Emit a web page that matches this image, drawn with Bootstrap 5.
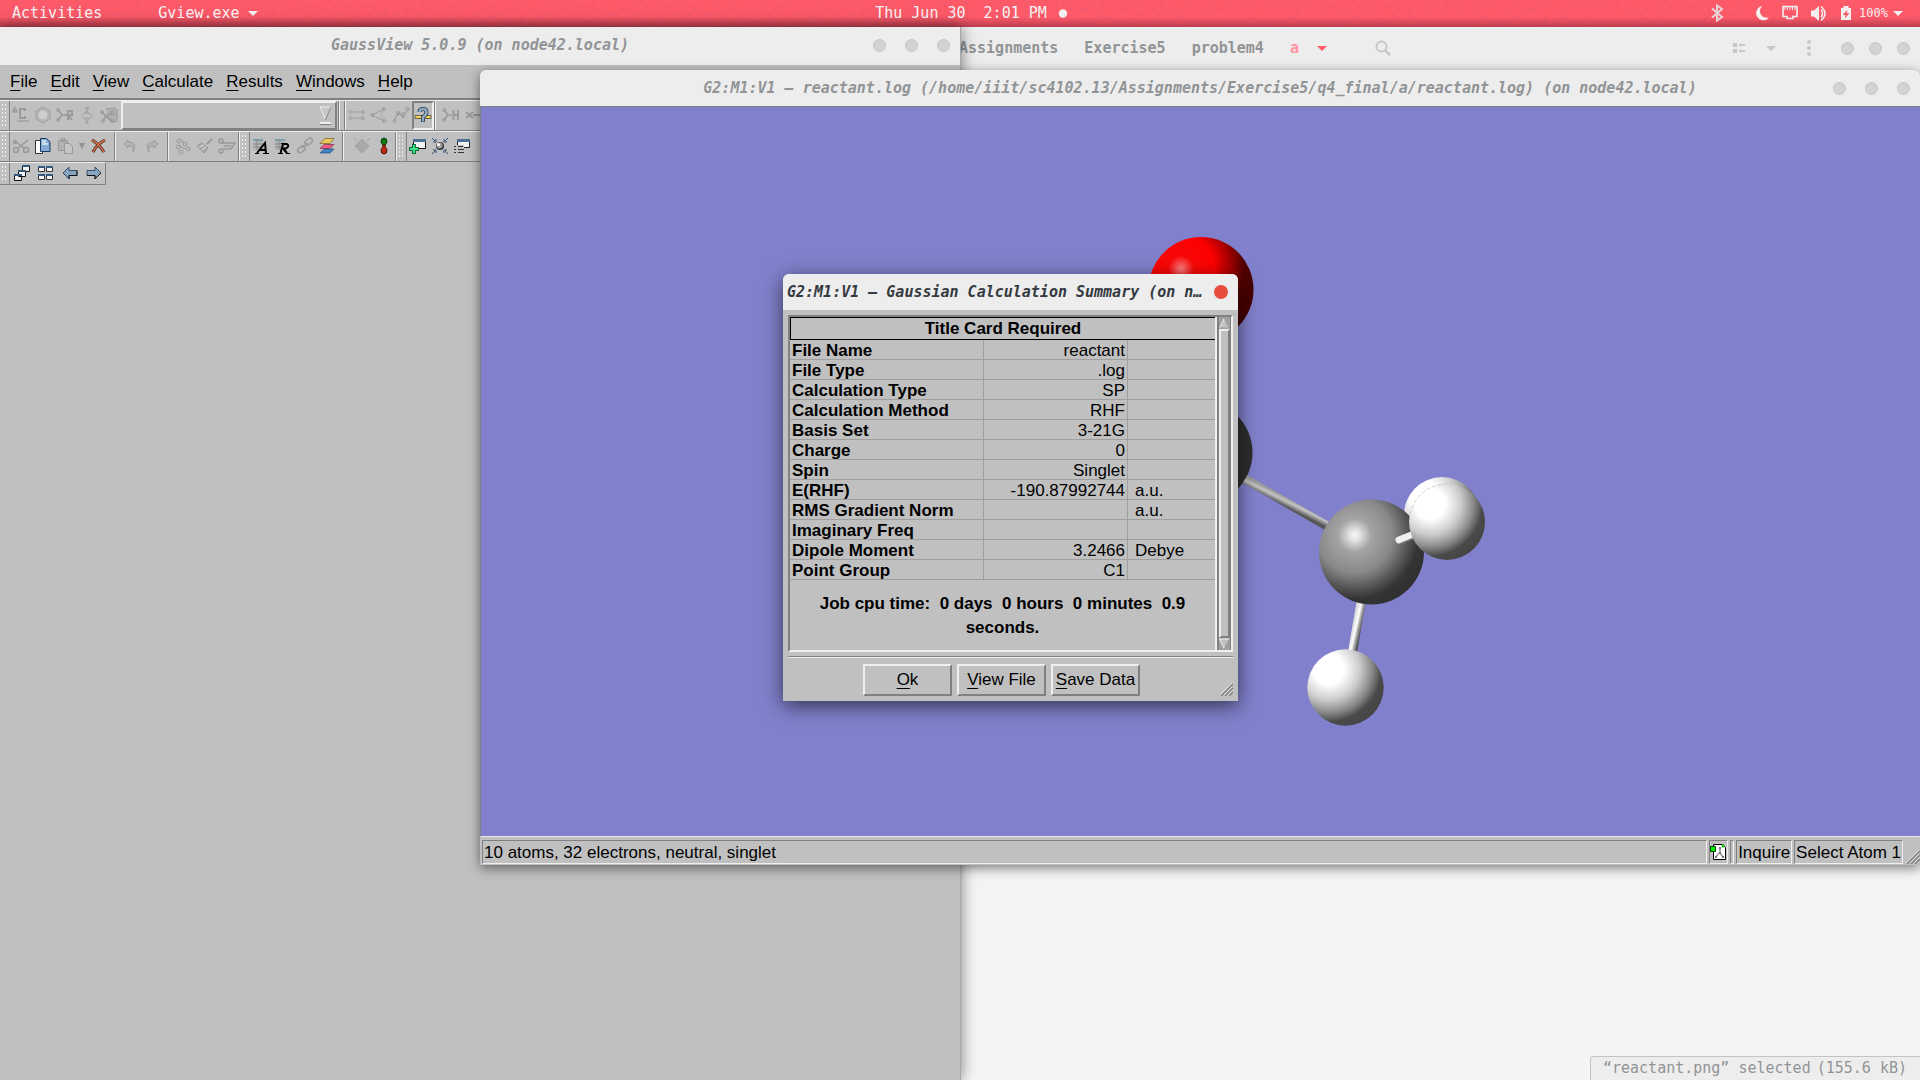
<!DOCTYPE html>
<html lang="en">
<head>
<meta charset="utf-8">
<meta name="viewport" content="width=device-width, initial-scale=1">
<title>GaussView desktop</title>
<link href="https://cdn.jsdelivr.net/npm/bootstrap@5.3.0/dist/css/bootstrap.min.css" rel="stylesheet">
<style>
:root{--face:#c0c0c0;--dark:#808080;--lite:#efefef;--mono:"DejaVu Sans Mono","Liberation Mono",monospace}
body{background:#f4f4f4;font-family:"Liberation Sans",Arial,sans-serif;font-size:17px;line-height:20px;color:#000}
.desk{min-height:100vh;overflow:hidden}
svg{display:block;flex:none}
button{font:inherit;color:inherit}
.plain{border:0;background:none;padding:0;display:flex;align-items:center;justify-content:center}
/* panel */
.panel{height:27px;background:#ff5a68;color:#f5f0f0;font:15px/27px var(--mono);display:grid;grid-template-columns:1fr auto 1fr;overflow:hidden}
.panel>.grain{position:absolute;left:0;top:0;width:100%;height:27px;opacity:.2}
.panel:after{content:"";position:absolute;left:0;right:0;top:17px;height:10px;background:linear-gradient(transparent,rgba(90,20,40,.4))}
.panel .slot{z-index:1}
.appname{margin-left:56px}
.clock{padding-left:26px}
.pct{font-size:12px;margin-left:-36px}
/* file manager */
.fm-head{height:72px;background:#ededed;padding:0 10px 30px 959px;font:bold 15px/20px var(--mono);color:#919496}
.crumbs{gap:26px}
.crumbs a{color:inherit;text-decoration:none}
.crumbs a.here{color:#ff96a0}
.fm-foot{right:0;bottom:0;height:24px;background:#ededed;border:1px solid #c4c4c4;border-width:1px 0 0 1px;border-radius:4px 0 0 0;padding:0 13px 0 12px;gap:6px;font:15px/23px var(--mono);color:#919496}
/* windows */
.win{background:var(--face)}
.main-win{left:0;top:27px;bottom:0;width:961px;border-right:1px solid #a8a8a8;box-shadow:0 0 14px rgba(0,0,0,.5)}
.view-win{left:480px;right:0;top:70px;height:795px;border-radius:6px 6px 0 0;box-shadow:0 3px 12px rgba(0,0,0,.5)}
.calc-win{left:783px;top:274px;width:455px;border-radius:6px 6px 0 0;box-shadow:0 5px 20px rgba(0,0,0,.6)}
.bar{background:#ededed;display:grid;grid-template-columns:1fr auto 1fr;align-items:center;font:italic bold 15px/20px var(--mono);color:#919496;border-radius:6px 6px 0 0}
.dots{gap:19px;padding-right:10px}
.dots.tight{gap:15px;padding:0 0 0 4px}
.dot{width:13px;height:13px;border-radius:50%;border:1px solid #c6c6c6;background:#d3d3d3;padding:0}
.dot.close-on{width:14px;height:14px;background:#e84c3d;border:0}
.main-win .bar{height:38px;padding-bottom:2px;border-radius:0}
.view-win .bar{height:36px}
.calc-win .bar{height:36px;color:#343a3f;display:flex;padding:0 10px 0 4px}
.menus{height:35px;padding:0 10px;gap:13px;border-bottom:2px solid var(--dark)}
.menus .plain{height:33px}
u{text-underline-offset:3px;text-decoration-thickness:1px}
.tools{border-top:1px solid var(--lite);border-bottom:1px solid var(--dark);height:31px}
.tools.last{height:23px;width:106px;border-right:1px solid var(--dark)}
.tools .plain{width:22px;align-self:stretch;padding-bottom:2px}
.tools .plain.slim{width:12px}
.tools .plain.held{border:2px solid;border-color:var(--dark) var(--lite) var(--lite) var(--dark);padding:0}
.tools .wide .plain{width:24px}
.grip{width:10px;align-self:stretch;border-right:1px solid var(--dark);background:radial-gradient(circle,#eee 1px,transparent 1px) 1px 2px/3px 4px;background-clip:content-box;padding:3px 2px 3px 1px;flex:none}
.gap-line{width:9px;flex:none;align-self:stretch;background:linear-gradient(90deg,transparent 4px,var(--dark) 4px 5px,var(--lite) 5px 6px,transparent 6px)}
.seam{width:2px;flex:none;align-self:stretch;border-left:1px solid var(--dark);border-right:1px solid var(--lite)}
.combo{width:216px;height:29px;appearance:none;border:2px solid;border-color:var(--lite) var(--dark) var(--dark) var(--lite);border-radius:0;background:none;margin:0 1px;outline:0}
.combo-wrap{position:relative}
.combo-wrap svg{position:absolute;right:6px;top:5px;pointer-events:none}
.stage{border-top:1px solid var(--dark);border-left:1px solid var(--dark);background:#8080cc;border-bottom:1px solid #e8e8e8}
.status{height:28px;padding:3px 0 1px 2px;gap:2px}
.cell-in{border:1px solid;border-color:var(--dark) var(--lite) var(--lite) var(--dark);padding:2px 1px 0;line-height:20px;white-space:nowrap}
.cell-in.plain{padding:0}
/* summary dialog */
.frame{margin:5px 5px 0;height:337px;border:2px solid;border-color:var(--dark) var(--lite) var(--lite) var(--dark)}
.sum{border-collapse:separate;border-spacing:0;width:100%;table-layout:fixed}
.sum caption{caption-side:top;border:1px solid #000;border-right:0;padding:1px 0;color:#000;font-weight:bold;text-align:center;line-height:20px;height:23px}
.sum .c1{width:193px}
.sum .c2{width:144px}
.sum th,.sum td{border-bottom:1px solid #a0a0a0;padding:3px 2px 0;height:20px;line-height:16px;white-space:nowrap}
.sum td{border-left:1px solid #a0a0a0;text-align:right}
.sum td+td{text-align:left;padding-left:7px}
.cpu{font-weight:bold;line-height:24px;padding:12px 18px 0;margin:0;text-align:center}
.sbar{width:14px;border-left:2px solid var(--dark);border-right:1px solid var(--dark);background:#a0a0a0}
.sbar .plain{height:12px}
.thumb{border:2px solid;border-color:var(--lite) var(--dark) var(--dark) var(--lite);background:var(--face)}
.lined{border-left:2px solid var(--lite)}
.rule{margin:4px 5px 0;border-top:1px solid var(--dark);border-bottom:1px solid var(--lite);height:2px}
.push{width:89px;height:32px;border:2px solid;border-color:var(--lite) var(--dark) var(--dark) var(--lite);background:var(--face);padding:0;line-height:28px}
.feet{padding:6px 23px 5px 5px;gap:5px}
.sizer{right:5px;bottom:5px}
</style>
<script src="https://cdn.jsdelivr.net/npm/bootstrap@5.3.0/dist/js/bootstrap.bundle.min.js"></script>
</head>
<body>
<div class="desk position-relative">

<header class="panel position-relative">
  <svg class="grain" aria-hidden="true"><filter id="noise" x="0" y="0" width="100%" height="100%"><feTurbulence type="fractalNoise" baseFrequency=".25" numOctaves="3"/><feColorMatrix values="0 0 0 0 .65  0 0 0 0 .1  0 0 0 0 .2  6 0 0 0 -2.8"/></filter><rect width="100%" height="100%" filter="url(#noise)"/></svg>
  <div class="slot d-flex align-items-center ps-2">
    <button class="plain ms-1">Activities</button>
    <button class="plain gap-2 appname">Gview.exe<svg width="10" height="5"><path d="M0 0h10l-5 5z" fill="#f5f0f0"/></svg></button>
  </div>
  <div class="slot d-flex align-items-center clock">
    <button class="plain">Thu Jun 30&nbsp; 2:01 PM</button>
    <svg class="ms-2" width="16" height="9"><circle cx="8" cy="4.500" r="4.200" fill="#f5f0f0"/></svg>
  </div>
  <div class="slot d-flex align-items-center justify-content-end pe-3">
    <svg width="186" height="27" fill="#f5f0f0">
      <path d="M3 9l10 8.500-5 3.500V6l5 3.500-10 8.500" transform="translate(0 -.5)" fill="none" stroke="#e8d4d6" stroke-width="2"/>
      <path d="M53 6a7.200 7.200 0 1 0 7 11.500q-8 1-9-5.500 0-4 2-6z"/>
      <path d="M74 6.500h14v10h-4v2h-6v-2h-4z" fill="none" stroke="#f5f0f0" stroke-width="1.600"/><path d="M76 7v3M78.500 7v3M81 7v3M83.500 7v3M86 7v3" stroke="#f5f0f0"/>
      <path d="M102 10.500h3l5-4.500v15l-5-4.500h-3z"/><path d="M112 9.500q3 4 0 8M112 6.500q8 7 0 14" fill="none" stroke="#f5f0f0" stroke-width="1.600"/>
      <path fill-rule="evenodd" d="M132 8h2.500V6h5v2h2.500v12h-10zM138.500 9.500l-5 5.500h3l-.5 3.500 4.500-5.500h-3z"/>
    </svg>
    <button class="plain gap-1 pct">100%<svg width="12" height="5"><path d="M1 0h10l-5 5z" fill="#f5f0f0"/></svg></button>
  </div>
</header>

<section aria-label="Files">
  <div class="fm-head d-flex align-items-center">
    <div class="crumbs d-flex"><a href="#">Assignments</a><a href="#">Exercise5</a><a href="#">problem4</a><a href="#" class="here">a</a></div>
    <svg class="ms-3" width="12" height="5"><path d="M2 0h10l-5 5z" fill="#ff5a68"/></svg>
    <button class="plain ms-5" aria-label="Search"><svg width="16" height="16" fill="none" stroke="#c8c8c8" stroke-width="2"><circle cx="6.500" cy="6.500" r="5"/><path d="M10 10l5 5" stroke-width="2.500"/></svg></button>
    <span class="flex-grow-1"></span>
    <svg width="80" height="16" fill="#c8c8c8"><path d="M0 3h4v4H0zM0 9h4v4H0zM6 4h6v2H6zM6 10h6v2H6zM33 6h10l-5 5z"/><circle cx="76" cy="2" r="2"/><circle cx="76" cy="8" r="2"/><circle cx="76" cy="14" r="2"/></svg>
    <div class="d-flex ms-4 dots tight"><button class="dot" aria-label="Minimize"></button><button class="dot" aria-label="Maximize"></button><button class="dot" aria-label="Close"></button></div>
  </div>
  <div class="fm-foot position-absolute d-flex"><span>“reactant.png” selected</span><span>(155.6 kB)</span></div>
</section>

<section class="win main-win position-absolute" aria-label="GaussView">
  <div class="bar"><span></span><span>GaussView 5.0.9 (on node42.local)</span>
    <div class="d-flex justify-content-end dots"><button class="dot" aria-label="Minimize"></button><button class="dot" aria-label="Maximize"></button><button class="dot" aria-label="Close"></button></div></div>
  <nav class="menus d-flex align-items-center">
    <button class="plain"><span><u>F</u>ile</span></button><button class="plain"><span><u>E</u>dit</span></button><button class="plain"><span><u>V</u>iew</span></button><button class="plain"><span><u>C</u>alculate</span></button><button class="plain"><span><u>R</u>esults</span></button><button class="plain"><span><u>W</u>indows</span></button><button class="plain"><span><u>H</u>elp</span></button>
  </nav>
  <div class="tools d-flex align-items-center">
    <span class="grip"></span>
    <button class="plain" aria-label="Element"><svg width="18" height="18" fill="none" stroke="#9a9a9a" stroke-width="2"><path d="M4 1L1.500 3v3h3V4H2" stroke-width="1.500"/><path d="M13 5V3H8v9h5v-2"/><path d="M5 15h12" stroke="#a8a8a8"/></svg></button>
    <button class="plain" aria-label="Ring"><svg width="18" height="18"><path d="M9 1l7 4v8l-7 4-7-4V5z" fill="#b4b4b4" stroke="#a0a0a0"/><circle cx="9" cy="9" r="4.500" fill="#cfcfcf"/></svg></button>
    <button class="plain" aria-label="R-group"><svg width="18" height="16" fill="none" stroke="#9a9a9a"><path d="M2 3l4 5-4 5M6 8h5" stroke-width="1.500"/><circle cx="2" cy="3" r="1.500"/><circle cx="2" cy="13" r="1.500"/><path d="M12 13V4h4v4h-4l4 5" stroke-width="2"/></svg></button>
    <button class="plain" aria-label="Biological fragment"><svg width="10" height="18" fill="none" stroke="#a0a0a0"><path d="M3 1q6 3 0 6t0 6 0 5M7 1q-6 3 0 6t0 6 0 5"/><path d="M3 2h4M3 7h4M3 12h4"/></svg></button>
    <button class="plain" aria-label="Custom fragment"><svg width="18" height="18" fill="none" stroke="#999"><path d="M6 3l8-1 3 2v11l-3 1-6-3" fill="#b0b0b0"/><path d="M2 6l4 4 6-3M6 10l-3 5M6 10l5 5" stroke-width="1.500"/><circle cx="2" cy="6" r="1.500"/><circle cx="3" cy="15" r="1.500"/><circle cx="12" cy="7" r="2"/><circle cx="12" cy="15" r="1.500"/></svg></button>
    <div class="combo-wrap"><select class="combo" aria-label="Fragment"><option></option></select>
      <svg width="13" height="20"><path d="M1 1h11L6.500 14z" fill="#c8c8c8" stroke="#eee"/><path d="M12 1L6.500 14" stroke="#808080"/><path d="M1 17h11" stroke="#eee" stroke-width="2"/><path d="M1 18.500h11" stroke="#808080"/></svg></div>
    <span class="seam"></span><span class="seam ms-1"></span>
    <button class="plain" aria-label="Bond"><svg width="18" height="12" fill="none" stroke="#a0a0a0"><path d="M3 3h12M3 9h12"/><circle cx="2.500" cy="3" r="1.500"/><circle cx="15" cy="3" r="1.500"/><circle cx="2.500" cy="9" r="1.500"/><circle cx="15" cy="9" r="1.500"/></svg></button>
    <button class="plain" aria-label="Angle"><svg width="18" height="16" fill="none" stroke="#9a9a9a"><path d="M14 2L2 8l12 6"/><path d="M13 4q-3 4 0 8" stroke-dasharray="1 1"/><circle cx="14" cy="2" r="1.500"/><circle cx="2.500" cy="8" r="1.500"/><circle cx="14" cy="14" r="1.500"/></svg></button>
    <button class="plain" aria-label="Dihedral"><svg width="18" height="16" fill="none" stroke="#9a9a9a"><path d="M2 14L6 6l6 4 4-8M4 9l9-4"/><circle cx="2.500" cy="14" r="1.500"/><circle cx="6" cy="6" r="1.500"/><circle cx="11" cy="9" r="1.500"/><circle cx="15.500" cy="2" r="1.500"/></svg></button>
    <button class="plain held" aria-label="Inquire"><svg width="18" height="18"><path d="M1 8.500h16v3H1z" fill="#f4d35a" stroke="#333" stroke-width=".7"/><path d="M5.500 5q0-3 3.500-3t3.500 3-3.500 5v5" fill="none" stroke="#26384c" stroke-width="4"/><path d="M5.500 5q0-3 3.500-3t3.500 3-3.500 5v4.500" fill="none" stroke="#8fa9c2" stroke-width="2.500"/></svg></button>
    <span class="seam"></span>
    <button class="plain ms-1" aria-label="Add valence"><svg width="18" height="16" fill="none" stroke="#9a9a9a"><path d="M2 3l4 5-4 5M6 8h4" stroke-width="1.500"/><circle cx="2" cy="3" r="1.500"/><circle cx="2" cy="13" r="1.500"/><path d="M11.500 3v10M16 3v10M12 8h4" stroke-width="2"/></svg></button>
    <button class="plain" aria-label="Delete atom"><svg width="18" height="16" fill="none" stroke="#9a9a9a"><path d="M2 5l7 6M9 5l-7 6M9 8h8" stroke-width="2"/></svg></button>
  </div>
  <div class="tools d-flex align-items-center">
    <span class="grip"></span>
    <button class="plain" aria-label="Cut"><svg width="18" height="16" fill="none" stroke="#999" stroke-width="1.500"><path d="M3 3l10 8M16 2L5 11"/><circle cx="4" cy="12" r="2.500"/><circle cx="14" cy="12" r="2.500"/><circle cx="3" cy="4" r="1.500"/></svg></button>
    <button class="plain" aria-label="Copy"><svg width="18" height="18"><path d="M1.500 3.500h7v13h-7z" fill="#fff" stroke="#333"/><path d="M6.500 1.500h6l3.500 3.500v9.500H6.500z" fill="#86abd2" stroke="#163a60"/><path d="M8 3h4v3h2v2H8z" fill="#c5d9ee"/></svg></button>
    <button class="plain" aria-label="Paste"><svg width="18" height="18" fill="#b3b3b3" stroke="#999"><path d="M2.500 3.500h9v10h-9zM5 1.500h4v3H5z"/><path d="M8.500 6.500h5l3 3v7h-8z" fill="#c4c4c4"/></svg></button>
    <button class="plain slim" aria-label="Paste options"><svg width="8" height="8"><path d="M1 1h6L4 7z" fill="#909090"/></svg></button>
    <button class="plain" aria-label="Delete"><svg width="18" height="16"><path d="M2 2q7 4 12 12M15 2Q7 6 3 14" fill="none" stroke="#4c2015" stroke-width="3"/><path d="M2 2q7 4 12 12M15 2Q7 6 3 14" fill="none" stroke="#c9704c" stroke-width="1.500"/></svg></button>
    <span class="gap-line"></span>
    <button class="plain" aria-label="Undo"><svg width="16" height="16" fill="#b4b4b4" stroke="#9a9a9a"><path d="M6 2L2 6l4 4V8q7-1 5 6 5-10-5-10z"/></svg></button>
    <button class="plain" aria-label="Redo"><svg width="16" height="16" fill="#b4b4b4" stroke="#9a9a9a"><path d="M10 2l4 4-4 4V8q-7-1-5 6Q0 4 10 4z"/></svg></button>
    <span class="gap-line"></span>
    <button class="plain" aria-label="Rebond"><svg width="18" height="18" fill="none" stroke="#999"><circle cx="5" cy="4" r="2"/><circle cx="11" cy="7" r="2"/><circle cx="4" cy="10" r="2"/><circle cx="14" cy="12" r="2"/><circle cx="7" cy="15" r="2"/><path d="M6 9l5 3M8 4l2 1"/></svg></button>
    <button class="plain" aria-label="Clean"><svg width="18" height="18" fill="#aaa" stroke="#999"><path d="M16 2l-5 5" stroke-width="2"/><path d="M6 6l6 5-4 5-7-7z"/><path d="M3 10l5-2M6 13l4-3" stroke="#ddd"/></svg></button>
    <button class="plain" aria-label="Symmetrize"><svg width="18" height="18" fill="none" stroke="#999" stroke-width="1.500"><path d="M3 6h14l-4 6H5M6 9h7"/><circle cx="3" cy="4" r="2"/><circle cx="3" cy="14" r="2"/></svg></button>
    <span class="seam"></span><span class="grip"></span>
    <button class="plain" aria-label="Atom list"><svg width="18" height="18"><path d="M1 2h10v11H1z" fill="#b0b6ba"/><path d="M1 2h10v2H1z" fill="#7da0a8"/><path d="M1 7h10M1 10h10M5 2v11" stroke="#888"/><path d="M5 16l8-10 1 10M8 13h6" fill="none" stroke="#000" stroke-width="2"/><path d="M3 16.500h4M11 16.500h6" stroke="#000"/></svg></button>
    <button class="plain" aria-label="Redundant coordinates"><svg width="18" height="18"><path d="M1 2h10v11H1z" fill="#b0b6ba"/><path d="M1 2h10v2H1z" fill="#7da0a8"/><path d="M1 7h10M1 10h10M5 2v11" stroke="#888"/><path d="M6.500 16L9 7h4q3 2-1 4.500H9l4 4.500" fill="none" stroke="#000" stroke-width="2"/><path d="M4 16.500h5M12 16.500h4M7 6.500h4" stroke="#000"/></svg></button>
    <button class="plain" aria-label="Connections"><svg width="18" height="18" fill="none" stroke="#999" stroke-width="1.500"><rect x="9" y="2" width="8" height="5" rx="2.500" transform="rotate(-40 13 5)"/><rect x="1" y="10" width="8" height="5" rx="2.500" transform="rotate(-40 5 12)"/><path d="M6 11l6-5"/></svg></button>
    <button class="plain" aria-label="Layers"><svg width="18" height="18" stroke-width=".6"><path d="M2 16l4-4h10l-4 4z" fill="#3f86cc" stroke="#173c66"/><path d="M2 11.500l4-4h10l-4 4z" fill="#ec5b86" stroke="#6c1c38"/><path d="M2 6.500l5-5h9l-4 5z" fill="#ecc85c" stroke="#6c4a10"/></svg></button>
    <span class="gap-line"></span>
    <button class="plain ms-1" aria-label="Crystal cell"><svg width="18" height="18"><path d="M9 2l7 7-7 7-7-7z" fill="#acacac" stroke="#a0a0a0"/><path d="M9 3v12M3 9h12" stroke="#a4a4a4"/><path d="M1 1l3 3M17 1l-3 3" stroke="#a0a0a0"/></svg></button>
    <button class="plain" aria-label="Orbitals"><svg width="10" height="18"><path d="M5 10L2 5q0-4 3-4t3 4z" fill="#0a7a14" stroke="#033d08"/><path d="M5 7l3 6q0 4-3 4t-3-4z" fill="#b82a12" stroke="#5c1006"/></svg></button>
    <span class="seam"></span><span class="grip"></span>
    <button class="plain" aria-label="New window"><svg width="18" height="18"><path d="M4.500 2.500h12v9h-12z" fill="#f4f4f4" stroke="#111"/><path d="M4 2h13v3H4z" fill="#4c7096"/><path d="M5 7v10M0 12h10" stroke="#0a6a34" stroke-width="4"/><path d="M5 8v8M1 12h8" stroke="#3ee08a" stroke-width="2"/></svg></button>
    <button class="plain" aria-label="Center"><svg width="18" height="18"><circle cx="9" cy="9" r="4" fill="#333"/><circle cx="8.500" cy="8.500" r="3" fill="#a0a0a0"/><circle cx="7.500" cy="7.500" r="1.500" fill="#fff"/><path d="M1 1l3 3M5 2v3H2M17 1l-3 3M13 2v3h3M1 17l3-3M2 13h3v3M17 17l-3-3M16 13h-3v3" fill="none" stroke="#2c4c70"/></svg></button>
    <button class="plain" aria-label="Window list"><svg width="18" height="18"><path d="M4.500 2.500h12v8h-12z" fill="#f4f4f4" stroke="#222"/><path d="M4 2h13v3H4z" fill="#4c7096"/><path d="M0 8h11v9H0z" fill="#c0c0c0"/><path d="M1 9.500h2M5 9.500h5M1 12.500h2M5 12.500h6M1 15.500h2M5 15.500h6" stroke="#333"/></svg></button>
  </div>
  <div class="tools last d-flex align-items-center">
    <span class="grip"></span>
    <div class="wide d-flex align-items-center">
    <button class="plain" aria-label="Cascade"><svg width="18" height="18" fill="#f4f4f4" stroke="#111"><path d="M9.500 1.500h7v6h-7zM5.500 6.500h7v6h-7zM1.500 10.500h7v6h-7z"/><path d="M9 2h8M5 7h8M1 11h8" stroke="#34587e" stroke-width="2"/></svg></button>
    <button class="plain" aria-label="Tile"><svg width="18" height="18" fill="#f4f4f4" stroke="#333"><path d="M1.500 2.500h6v5h-6zM9.500 2.500h6v5h-6zM1.500 10.500h6v5h-6zM9.500 10.500h6v5h-6z"/><path d="M1 3h7M9 3h7M1 11h7M9 11h7" stroke="#34587e" stroke-width="2"/></svg></button>
    <button class="plain" aria-label="Previous"><svg width="16" height="14"><path d="M7 1L1 7l6 6V9.500h8v-5H7z" fill="#88a4c0" stroke="#34506e"/><path d="M7 13V9.500h8v-5" fill="none" stroke="#111"/></svg></button>
    <button class="plain" aria-label="Next"><svg width="16" height="14"><path d="M9 1l6 6-6 6V9.500H1v-5h8z" fill="#88a4c0" stroke="#34506e"/><path d="M15 7l-6 6V9.500H1" fill="none" stroke="#111"/></svg></button>
    </div>
  </div>
</section>

<section class="win view-win position-absolute d-flex flex-column" aria-label="Molecule view">
  <div class="bar"><span></span><span>G2:M1:V1 – reactant.log (/home/iiit/sc4102.13/Assignments/Exercise5/q4_final/a/reactant.log) (on node42.local)</span>
    <div class="d-flex justify-content-end dots"><button class="dot" aria-label="Minimize"></button><button class="dot" aria-label="Maximize"></button><button class="dot" aria-label="Close"></button></div></div>
  <div class="stage flex-grow-1 overflow-hidden">
    <svg width="100%" height="100%" role="img" aria-label="Ball and stick model">
      <defs>
        <radialGradient id="oxy" cx=".31" cy=".3" r=".75"><stop offset="0" stop-color="#ff8080"/><stop offset=".16" stop-color="#f80808"/><stop offset=".42" stop-color="#f00"/><stop offset=".65" stop-color="#900"/><stop offset=".8" stop-color="#500000"/><stop offset="1" stop-color="#400"/></radialGradient>
        <radialGradient id="carb" cx=".34" cy=".34" r=".72"><stop offset="0" stop-color="#f8f8f8"/><stop offset=".08" stop-color="#dedede"/><stop offset=".22" stop-color="#a4a4a4"/><stop offset=".5" stop-color="#888"/><stop offset=".7" stop-color="#565656"/><stop offset=".84" stop-color="#343434"/><stop offset="1" stop-color="#303030"/></radialGradient>
        <radialGradient id="hyd" cx=".28" cy=".26" r=".84"><stop offset="0" stop-color="#fff"/><stop offset=".24" stop-color="#fff"/><stop offset=".48" stop-color="#ccc"/><stop offset=".68" stop-color="#888"/><stop offset=".82" stop-color="#4a4a4a"/><stop offset="1" stop-color="#444"/></radialGradient>
        <linearGradient id="rod" gradientUnits="userSpaceOnUse" x1="807" y1="391" x2="803" y2="399"><stop offset="0" stop-color="#999"/><stop offset=".4" stop-color="#c4c4c4"/><stop offset="1" stop-color="#555"/></linearGradient>
        <linearGradient id="rod2" gradientUnits="userSpaceOnUse" x1="872" y1="519" x2="881" y2="521"><stop offset="0" stop-color="#ddd"/><stop offset=".35" stop-color="#fff"/><stop offset=".6" stop-color="#aaa"/><stop offset="1" stop-color="#444"/></linearGradient>
      </defs>
      <circle cx="720" cy="182.500" r="52.500" fill="url(#oxy)"/>
      <circle cx="719" cy="345.500" r="52.500" fill="#2e2e2e"/>
      <path d="M764 372l84 48" stroke="url(#rod)" stroke-width="9"/>
      <path d="M881 490l-10 58" stroke="url(#rod2)" stroke-width="9"/>
      <circle cx="961" cy="408" r="38" fill="url(#hyd)"/>
      <circle cx="890.500" cy="445" r="52.500" fill="url(#carb)"/>
      <path d="M918 433l15-6" stroke="#f0f0f0" stroke-width="7" stroke-linecap="round"/><path d="M919 437l14-6" stroke="#777" stroke-width="1.500"/>
      <circle cx="966" cy="415" r="38" fill="url(#hyd)"/>
      <path d="M929 407a38 38 0 0 1 52-27" fill="none" stroke="#c4c4c4" stroke-width=".8" stroke-dasharray="4 2"/>
      <circle cx="864.500" cy="580.500" r="38.200" fill="url(#hyd)"/>
    </svg>
  </div>
  <div class="status d-flex">
    <div class="cell-in flex-grow-1">10 atoms, 32 electrons, neutral, singlet</div>
    <button class="plain cell-in" aria-label="Builder"><svg width="17" height="18"><path d="M3.500 1.500h9l3 3v12h-12z" fill="#fff" stroke="#000"/><path d="M10 5v5M9 10l-3 4M10 10l3 4" stroke="#999" stroke-width="1.500" fill="none"/><path d="M9 4h2v2H9zM9 9h2v2H9zM5 13h2v2H5zM12 13h2v2h-2z" fill="#777"/><path d="M.5 3.500h5v5h-5z" fill="#0e0" stroke="#040"/><circle cx="13" cy="3" r="1.500" fill="#0c0"/></svg></button>
    <span class="cell-in"></span>
    <div class="cell-in">Inquire</div>
    <div class="cell-in">Select Atom 1</div>
    <svg class="align-self-end" width="15" height="14" stroke="#808080" stroke-width="1.500"><path d="M2 14L15 1M6 14l9-9M10 14l5-5"/><path d="M1 13L14 0M5 13l9-9M9 13l6-6" stroke="#eee" stroke-width=".8"/></svg>
  </div>
</section>

<section class="win calc-win position-absolute" role="dialog" aria-label="Gaussian Calculation Summary">
  <div class="bar justify-content-between"><span>G2:M1:V1 – Gaussian Calculation Summary (on n…</span><button class="dot close-on" aria-label="Close"></button></div>
  <div class="frame d-flex">
    <div class="flex-grow-1">
      <table class="sum">
        <caption>Title Card Required</caption>
        <colgroup><col class="c1"><col class="c2"><col></colgroup>
        <tbody>
        <tr><th scope="row">File Name</th><td>reactant</td><td></td></tr>
        <tr><th scope="row">File Type</th><td>.log</td><td></td></tr>
        <tr><th scope="row">Calculation Type</th><td>SP</td><td></td></tr>
        <tr><th scope="row">Calculation Method</th><td>RHF</td><td></td></tr>
        <tr><th scope="row">Basis Set</th><td>3-21G</td><td></td></tr>
        <tr><th scope="row">Charge</th><td>0</td><td></td></tr>
        <tr><th scope="row">Spin</th><td>Singlet</td><td></td></tr>
        <tr><th scope="row">E(RHF)</th><td>-190.87992744</td><td>a.u.</td></tr>
        <tr><th scope="row">RMS Gradient Norm</th><td></td><td>a.u.</td></tr>
        <tr><th scope="row">Imaginary Freq</th><td></td><td></td></tr>
        <tr><th scope="row">Dipole Moment</th><td>3.2466</td><td>Debye</td></tr>
        <tr><th scope="row">Point Group</th><td>C1</td><td></td></tr>
        </tbody>
      </table>
      <p class="cpu">Job cpu time:&nbsp; 0 days&nbsp; 0 hours&nbsp; 0 minutes&nbsp; 0.9<br>seconds.</p>
    </div>
    <div class="lined d-flex">
      <div class="sbar d-flex flex-column">
        <button class="plain" aria-label="Scroll up"><svg width="11" height="12"><path d="M5.500 1l5 10h-10z" fill="#c0c0c0" stroke="#eee"/><path d="M5.500 1l5 10h-10" fill="none" stroke="#808080"/></svg></button>
        <div class="thumb flex-grow-1"></div>
        <button class="plain" aria-label="Scroll down"><svg width="11" height="12"><path d="M.5 1h10l-5 10z" fill="#c0c0c0" stroke="#eee"/><path d="M10.500 1l-5 10" stroke="#808080"/></svg></button>
      </div>
    </div>
  </div>
  <div class="rule"></div>
  <div class="feet d-flex justify-content-center position-relative">
    <button class="push"><u>O</u>k</button><button class="push"><u>V</u>iew File</button><button class="push"><u>S</u>ave Data</button>
    <svg class="position-absolute sizer" width="13" height="13" stroke="#808080" stroke-width="1.500"><path d="M1 13L13 1M5 13l8-8M9 13l4-4"/><path d="M0 12L12 0M4 12l8-8M8 12l5-5" stroke="#eee" stroke-width=".8"/></svg>
  </div>
</section>
</div>
</body>
</html>
